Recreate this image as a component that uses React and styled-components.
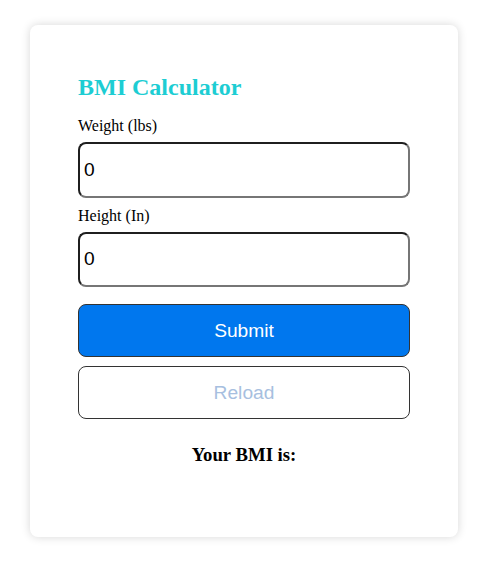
import React from "react";
import styled, { createGlobalStyle } from "styled-components";

const Global = createGlobalStyle`
  html, body { margin: 0; padding: 0; background: #ffffff; }
  body { font-family: "Liberation Serif", "Times New Roman", serif; }
`;

const Page = styled.div`
  padding: 25px 37px 47px 30px;
`;

const Card = styled.div`
  background: #ffffff;
  border-radius: 8px;
  box-shadow: 0 0 10px rgba(0, 0, 0, 0.16);
  padding: 48px 48px 0 48px;
  height: 512px;
  box-sizing: border-box;
  display: flex;
  flex-direction: column;
`;

const Title = styled.h2`
  margin: 0 0 16px 0;
  font-family: "Liberation Serif", "Times New Roman", serif;
  font-size: 24px;
  line-height: 28px;
  font-weight: bold;
  color: #1dcdd3;
`;

const Label = styled.label`
  display: block;
  font-family: "Liberation Serif", "Times New Roman", serif;
  font-size: 16px;
  line-height: 18px;
  color: #000;
  margin: ${(p) => p.$mt || 0}px 0 7px 0;
`;

const Input = styled.input`
  display: block;
  width: 100%;
  height: 55.5px;
  flex-shrink: 0;
  box-sizing: border-box;
  border-radius: 8px;
  border-width: 2px;
  border-style: solid;
  border-color: #1f1f1f #767676 #767676 #1f1f1f;
  padding: 0 4px;
  font-family: "Liberation Sans", Arial, sans-serif;
  font-size: 19.2px;
  color: #000;
  background: #fff;
  outline: none;
`;

const Button = styled.button`
  display: block;
  width: 100%;
  height: 53px;
  flex-shrink: 0;
  box-sizing: border-box;
  border-radius: 8px;
  border: 1px solid #333;
  font-family: "Liberation Sans", Arial, sans-serif;
  font-size: 19.2px;
  margin-top: ${(p) => p.$mt}px;
  background: ${(p) => (p.$primary ? "#0077ee" : "#ffffff")};
  color: ${(p) => (p.$primary ? "#ffffff" : "#a7bfe0")};
  cursor: pointer;
`;

const Result = styled.h3`
  margin: 25px 0 0 0;
  text-align: center;
  font-family: "Liberation Serif", "Times New Roman", serif;
  font-size: 18.72px;
  line-height: 21px;
  font-weight: bold;
  color: #000;
`;

export default function App() {
  return (
    <>
      <Global />
      <Page>
        <Card>
          <Title>BMI Calculator</Title>
          <Label>Weight (lbs)</Label>
          <Input defaultValue="0" />
          <Label $mt={9}>Height (In)</Label>
          <Input defaultValue="0" />
          <Button $primary $mt={17}>Submit</Button>
          <Button $mt={9}>Reload</Button>
          <Result>Your BMI is:</Result>
        </Card>
      </Page>
    </>
  );
}
